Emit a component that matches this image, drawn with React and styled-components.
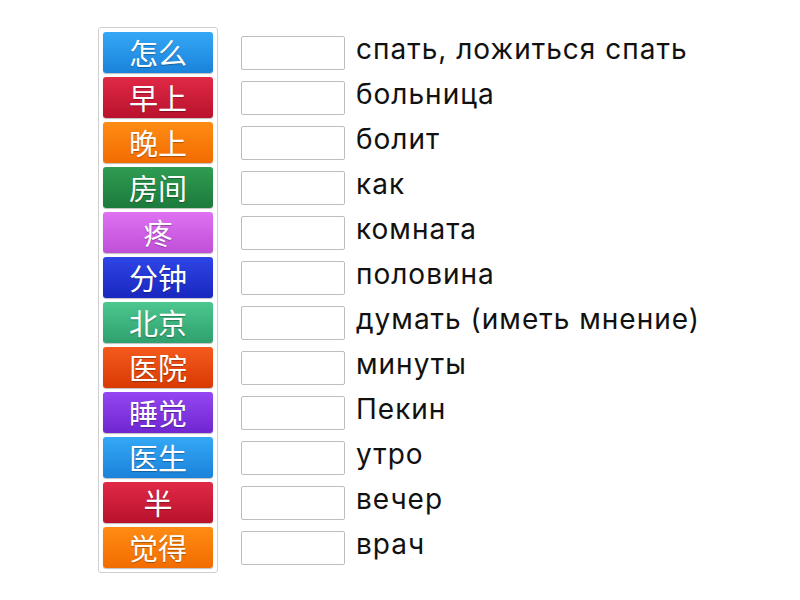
import React from 'react';
import styled, {createGlobalStyle} from 'styled-components';

const GlobalStyle = createGlobalStyle`
  body {
    margin: 0;
    background: #fff;
    font-family: Inter, "Noto Sans", sans-serif;
  }
`;

const palette = {
  blue: ['#34a8f6', '#1b82da'],
  red: ['#e02a46', '#b9112d'],
  orange: ['#ff8c14', '#f26c00'],
  green: ['#2f9c52', '#1d7a3c'],
  pink: ['#de72f2', '#c04fd8'],
  navy: ['#2e45e6', '#1a27bf'],
  teal: ['#4cc78e', '#2fa06e'],
  vermilion: ['#f45a1e', '#d93a02'],
  purple: ['#9447f2', '#6f26d0'],
};

const pairs = [
  ['怎么', 'blue', 'спать, ложиться спать'],
  ['早上', 'red', 'больница'],
  ['晚上', 'orange', 'болит'],
  ['房间', 'green', 'как'],
  ['疼', 'pink', 'комната'],
  ['分钟', 'navy', 'половина'],
  ['北京', 'teal', 'думать (иметь мнение)'],
  ['医院', 'vermilion', 'минуты'],
  ['睡觉', 'purple', 'Пекин'],
  ['医生', 'blue', 'утро'],
  ['半', 'red', 'вечер'],
  ['觉得', 'orange', 'врач'],
];

const Page = styled.div`
  display: flex;
  align-items: flex-start;
  padding: 27px 0 0 98px;
`;

const Bank = styled.div`
  display: flex;
  flex-direction: column;
  gap: 4px;
  padding: 4px;
  border: 1px solid #cfcfcf;
  border-radius: 3px;
`;

const Tile = styled.div`
  width: 110px;
  height: 41px;
  display: flex;
  align-items: center;
  justify-content: center;
  border-radius: 3px;
  background: linear-gradient(${p => p.$top}, ${p => p.$bottom});
  box-shadow: 0 1px 1px rgba(0, 0, 0, 0.25);
  color: #fff;
  font-family: "Noto Sans CJK SC", sans-serif;
  font-size: 29px;
  line-height: 1;
  text-shadow: 0 1px 1px rgba(0, 0, 0, 0.3);
`;

const Targets = styled.div`
  display: flex;
  flex-direction: column;
  gap: 4px;
  margin: 5px 0 0 23px;
`;

const Row = styled.div`
  height: 41px;
  display: flex;
  align-items: center;
  gap: 11px;
`;

const Slot = styled.div`
  width: 102px;
  height: 32px;
  border: 1px solid #bdbdbd;
  border-radius: 2px;
  background: #fff;
`;

const Label = styled.span`
  font-family: Inter, sans-serif;
  font-size: 28px;
  letter-spacing: 1px;
  line-height: 1;
  color: #111;
  margin-top: -8px;
`;

export default function App() {
  return (
    <>
      <GlobalStyle />
      <Page>
        <Bank>
          {pairs.map(([word, colour]) => (
            <Tile key={word} $top={palette[colour][0]} $bottom={palette[colour][1]}>
              {word}
            </Tile>
          ))}
        </Bank>
        <Targets>
          {pairs.map(([word, , meaning]) => (
            <Row key={word}>
              <Slot />
              <Label>{meaning}</Label>
            </Row>
          ))}
        </Targets>
      </Page>
    </>
  );
}
